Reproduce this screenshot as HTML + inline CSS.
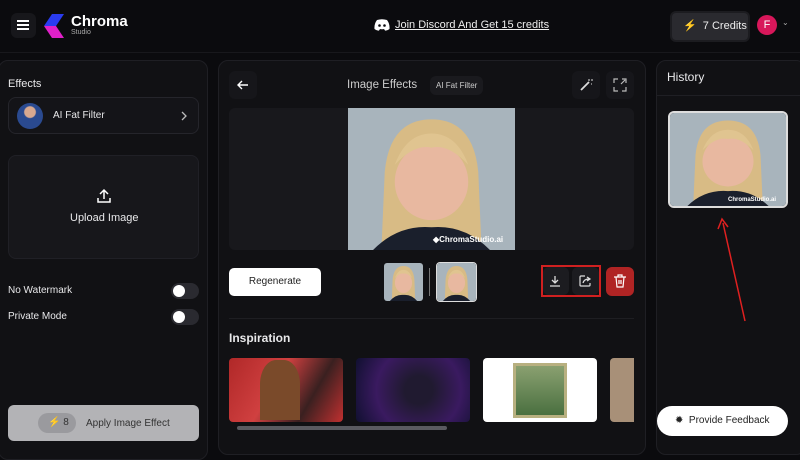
<!DOCTYPE html>
<html><head><meta charset="utf-8"><style>
*{box-sizing:border-box;margin:0;padding:0}
body{width:800px;height:450px;background:#0b0b0e;font-family:"Liberation Sans",sans-serif;color:#e8e8ea;position:relative;overflow:hidden}
.a{position:absolute}
.panel{position:absolute;background:#111114;border:1px solid #1f1f24;border-radius:10px}
.btn{position:absolute;background:#1a1a1f;border-radius:6px}
.tog{position:absolute;width:28px;height:16px;border-radius:8px;background:#2a2a30}
.tog:after{content:"";position:absolute;left:2px;top:2px;width:12px;height:12px;border-radius:50%;background:#fff}
</style></head><body>
<svg width="0" height="0" style="position:absolute"><defs>
<g id="face">
<rect width="100" height="100" fill="#a8b4bc"/>
<path d="M20 100 L22 45 Q25 8 50 8 Q75 8 78 45 L80 100Z" fill="#d8bb85"/>
<ellipse cx="50" cy="52" rx="22" ry="27" fill="#e8b8a0"/>
<path d="M28 40 Q35 18 50 18 Q65 18 72 40 Q60 25 50 28 Q40 25 28 40Z" fill="#e0c490"/>
<path d="M15 100 Q30 82 50 84 Q70 82 85 100Z" fill="#1a1f2c"/>
</g></defs></svg>
<!-- header -->
<div class="btn" style="left:11px;top:13px;width:25px;height:25px;background:#17171b"></div>
<div class="a" style="left:17px;top:20px;width:12px;height:2px;background:#fff;box-shadow:0 4px 0 #fff,0 8px 0 #fff"></div>
<svg class="a" style="left:44px;top:14px" width="22" height="24"><path d="M8 0H20L12 12H0Z" fill="#2a3cf0"/><path d="M0 12H12L20 24H8Z" fill="#e020c8"/></svg>
<div class="a" style="left:71px;top:13px;font-size:15px;font-weight:bold;color:#fff">Chroma</div>
<div class="a" style="left:71px;top:29px;font-size:7px;color:#aaa">Studio</div>
<svg class="a" style="left:374px;top:19px" width="16" height="12" viewBox="0 0 16 12"><path d="M3 1 Q8 -0.5 13 1 Q16 5 15.5 10 Q13 12 11 11.5 L10 10 Q8 10.6 6 10 L5 11.5 Q3 12 0.5 10 Q0 5 3 1Z" fill="#fff"/><circle cx="5.5" cy="6.5" r="1.3" fill="#0b0b0e"/><circle cx="10.5" cy="6.5" r="1.3" fill="#0b0b0e"/></svg>
<div class="a" style="left:395px;top:19px;font-size:11px;text-decoration:underline;color:#eee">Join Discord And Get 15 credits</div>
<div class="btn" style="left:670px;top:11px;width:80px;height:31px;background:#2a2a2f;border:2px solid #1c1c20"></div>
<div class="a" style="left:683px;top:19px;font-size:11px;color:#eee">⚡ &nbsp;7 Credits</div>
<div class="a" style="left:757px;top:15px;width:20px;height:20px;border-radius:50%;background:#d8175a;font-size:11px;text-align:center;line-height:20px;color:#fff">F</div>
<div class="a" style="left:782px;top:18px;font-size:8px;color:#aaa">⌄</div>
<div class="a" style="left:0;top:52px;width:800px;height:1px;background:#18181c"></div>
<!-- left -->
<div class="panel" style="left:-2px;top:60px;width:210px;height:400px"></div>
<div class="a" style="left:8px;top:78px;font-size:11px">Effects</div>
<div class="a" style="left:8px;top:97px;width:191px;height:37px;border:1px solid #25252b;border-radius:8px;background:#141418"></div>
<div class="a" style="left:17px;top:103px;width:26px;height:26px;border-radius:50%;background:radial-gradient(circle at 50% 35%,#d9a990 25%,#2a4a90 30%);"></div>
<div class="a" style="left:53px;top:110px;font-size:10px">AI Fat Filter</div>
<svg class="a" style="left:180px;top:110px" width="8" height="12"><path d="M2 2 L6 6 L2 10" stroke="#bbb" stroke-width="1.3" fill="none"/></svg>
<div class="a" style="left:8px;top:155px;width:191px;height:104px;border-radius:8px;background:#17171b;border:1px solid #202026"></div>
<svg class="a" style="left:96px;top:188px" width="16" height="16"><path d="M8 11V2 M4 6 L8 2 L12 6 M2 10V14H14V10" stroke="#fff" stroke-width="1.5" fill="none"/></svg>
<div class="a" style="left:70px;top:212px;font-size:11px">Upload Image</div>
<div class="a" style="left:8px;top:285px;font-size:10px">No Watermark</div>
<div class="tog" style="left:171px;top:283px"></div>
<div class="a" style="left:8px;top:311px;font-size:10px">Private Mode</div>
<div class="tog" style="left:171px;top:309px"></div>
<div class="a" style="left:8px;top:405px;width:191px;height:36px;border-radius:6px;background:#b3b3b6"></div>
<div class="a" style="left:38px;top:413px;width:38px;height:20px;border-radius:10px;background:#9a9a9e;font-size:10px;color:#333;line-height:20px;padding-left:10px">⚡ 8</div>
<div class="a" style="left:86px;top:418px;font-size:10px;color:#333">Apply Image Effect</div>
<!-- center -->
<div class="panel" style="left:218px;top:60px;width:428px;height:395px"></div>
<div class="btn" style="left:229px;top:71px;width:28px;height:28px;background:#16161a"></div>
<svg class="a" style="left:236px;top:78px" width="14" height="14"><path d="M12 7H2 M6 3 L2 7 L6 11" stroke="#fff" stroke-width="1.4" fill="none"/></svg>
<div class="a" style="left:347px;top:79px;font-size:11.5px;color:#ccc">Image Effects</div>
<div class="btn" style="left:430px;top:76px;width:53px;height:19px;background:#1a1a1e"></div>
<div class="a" style="left:436px;top:81px;font-size:8px;color:#ccc">AI Fat Filter</div>
<div class="btn" style="left:572px;top:71px;width:28px;height:28px;background:#16161a"></div>
<svg class="a" style="left:579px;top:78px" width="14" height="14"><path d="M2 12 L10 4" stroke="#ddd" stroke-width="1.8"/><path d="M10 1V3 M12 2H14 M12 6H13" stroke="#ddd" stroke-width="1"/></svg>
<div class="btn" style="left:606px;top:71px;width:28px;height:28px;background:#16161a"></div>
<svg class="a" style="left:613px;top:78px" width="14" height="14"><path d="M1 5V1H5 M9 1H13V5 M1 9V13H5 M13 9V13H9 M8 6 L12 2" stroke="#bbb" stroke-width="1.2" fill="none"/></svg>
<div class="a" style="left:229px;top:108px;width:405px;height:142px;background:#18181c;border-radius:6px"></div>
<svg class="a" style="left:348px;top:108px" width="167" height="142" viewBox="0 0 100 100" preserveAspectRatio="none"><use href="#face"/></svg>
<div class="a" style="left:433px;top:235px;font-size:8px;font-weight:bold;color:#fff">◆ChromaStudio.ai</div>
<div class="a" style="left:229px;top:268px;width:92px;height:28px;background:#fff;border-radius:5px;font-size:10px;color:#222;text-align:center;line-height:28px">Regenerate</div>
<svg class="a" style="left:384px;top:263px;border-radius:3px" width="39" height="38" viewBox="0 0 100 100" preserveAspectRatio="none"><use href="#face"/></svg>
<div class="a" style="left:429px;top:268px;width:1px;height:28px;background:#777"></div>
<svg class="a" style="left:436px;top:262px;border:1px solid #ddd;border-radius:4px" width="41" height="40" viewBox="0 0 100 100" preserveAspectRatio="none"><use href="#face"/></svg>
<div class="a" style="left:541px;top:265px;width:60px;height:32px;border:2px solid #d02020"></div>
<div class="btn" style="left:543px;top:267px;width:26px;height:28px;background:#1c1c20"></div>
<div class="btn" style="left:572px;top:267px;width:27px;height:28px;background:#1c1c20"></div>
<svg class="a" style="left:549px;top:275px" width="12" height="12"><path d="M6 1V8 M3 5 L6 8 L9 5 M1 11H11" stroke="#ddd" stroke-width="1.3" fill="none"/></svg>
<svg class="a" style="left:579px;top:275px" width="13" height="12"><path d="M6 1H2Q1 1 1 2V10Q1 11 2 11H10Q11 11 11 10V8 M4 8Q5 4 10 4 M8 2 L11 4 L8 6" stroke="#ddd" stroke-width="1.2" fill="none"/></svg>
<div class="btn" style="left:606px;top:267px;width:28px;height:29px;background:#b02424"></div>
<svg class="a" style="left:613px;top:274px" width="14" height="14"><path d="M1 3H13 M5 3V1H9V3 M3 3 L4 13H10 L11 3 M6 6V10 M8 6V10" stroke="#fff" stroke-width="1.2" fill="none"/></svg>
<div class="a" style="left:229px;top:318px;width:405px;height:1px;background:#1e1e22"></div>
<div class="a" style="left:229px;top:331px;font-size:12px;font-weight:bold">Inspiration</div>
<div class="a" style="left:229px;top:358px;width:114px;height:64px;border-radius:4px;background:linear-gradient(120deg,#b02828,#d04040 40%,#3a2020 70%,#c03030)"></div>
<div class="a" style="left:260px;top:360px;width:40px;height:60px;border-radius:40% 40% 0 0;background:#7a4a2a"></div>
<div class="a" style="left:356px;top:358px;width:114px;height:64px;border-radius:4px;background:radial-gradient(circle at 55% 50%,#201a30 20%,#3a1a60 60%,#101030)"></div>
<div class="a" style="left:483px;top:358px;width:114px;height:64px;border-radius:4px;background:#fff"></div>
<div class="a" style="left:513px;top:363px;width:54px;height:55px;background:linear-gradient(#8aa070,#4a7040);border:3px solid #b8b080"></div>
<div class="a" style="left:610px;top:358px;width:24px;height:64px;border-radius:4px 0 0 4px;background:#a89078"></div>
<div class="a" style="left:237px;top:426px;width:210px;height:4px;border-radius:2px;background:#5a5a60"></div>
<!-- right -->
<div class="panel" style="left:656px;top:60px;width:150px;height:395px"></div>
<div class="a" style="left:667px;top:70px;font-size:12px">History</div>
<div class="a" style="left:656px;top:95px;width:144px;height:1px;background:#1f1f24"></div>
<svg class="a" style="left:668px;top:111px;border:2px solid #ddd;border-radius:6px" width="120" height="97" viewBox="0 0 100 100" preserveAspectRatio="none"><use href="#face"/></svg>
<div class="a" style="left:728px;top:197px;font-size:6px;color:#fff;font-weight:bold">ChromaStudio.ai</div>
<svg class="a" style="left:715px;top:215px" width="35" height="110"><path d="M30 106 L8 8" stroke="#e02020" stroke-width="1.5"/><path d="M3 14 L7 4 L13 12" stroke="#e02020" stroke-width="1.5" fill="none"/></svg>
<div class="a" style="left:657px;top:406px;width:131px;height:30px;border-radius:15px;background:#fff;color:#222;font-size:10px;line-height:30px;padding-left:18px">✹ &nbsp;Provide Feedback</div>
</body></html>
